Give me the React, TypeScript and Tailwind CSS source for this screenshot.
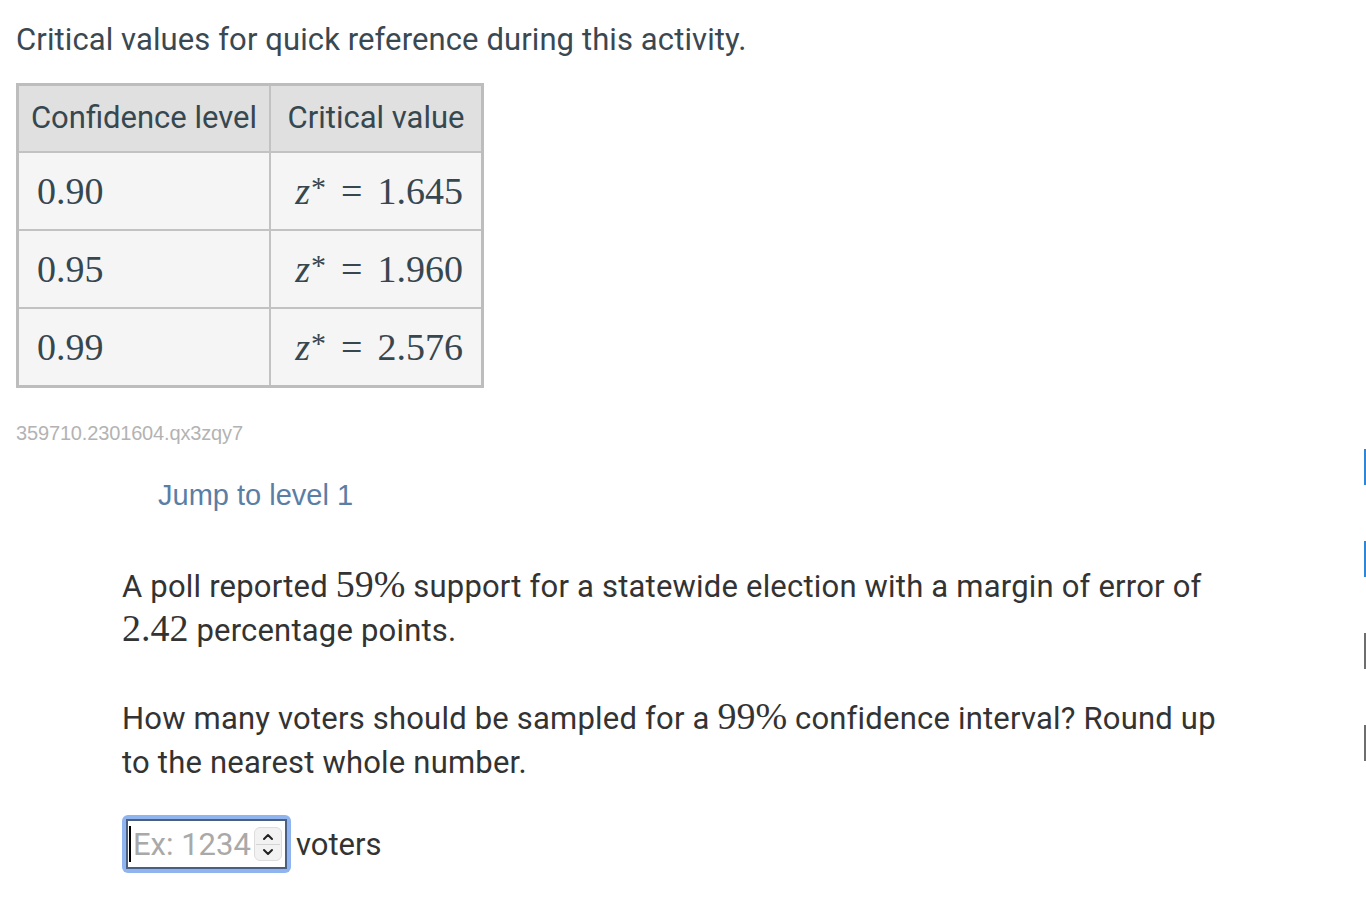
import React from "react";

const roboto = { fontFamily: "Roboto, 'Noto Sans', sans-serif" };

function M({ children }: { children: React.ReactNode }) {
  return (
    <span className="font-['Liberation_Serif','Times_New_Roman',serif] text-[38px] leading-[30px] font-normal tracking-normal">{children}</span>
  );
}

function Z() {
  return (
    <span className="font-['Liberation_Serif',serif] text-[38px] inline-flex items-baseline">
      <i className="mr-[1px]">z</i>
      <span className="text-[30px] leading-none relative -top-[7px]">*</span>
      <span className="mx-[15px]">=</span>
    </span>
  );
}

export default function App() {
  const rows = [
    ["0.90", "1.645"],
    ["0.95", "1.960"],
    ["0.99", "2.576"],
  ];
  return (
    <div className="flex w-[1366px] min-h-[904px] bg-white" style={roboto}>
      <div className="flex-1 pl-[16px] pt-[17px]">
        <h1 className="text-[31px] leading-[45px] text-[#3a4852] font-normal tracking-[0.1px]">
          Critical values for quick reference during this activity.
        </h1>

        <div className="mt-[21px] w-[468px] border-[3px] border-[#bdbdbd] bg-[#c2c2c2] grid grid-cols-[250px_210px] gap-[2px] text-[#37474f]">
          <div className="h-[65px] bg-[#e0e0e0] flex items-center justify-center text-[31px]">
            Confidence level
          </div>
          <div className="h-[65px] bg-[#e0e0e0] flex items-center justify-center text-[31px]">
            Critical value
          </div>
          {rows.map(([a, b]) => (
            <React.Fragment key={a}>
              <div className="h-[76px] bg-[#f5f5f5] flex items-center pl-[18px] font-['Liberation_Serif',serif] text-[38px]">
                {a}
              </div>
              <div className="h-[76px] bg-[#f5f5f5] flex items-center justify-end pr-[18px]">
                <Z />
                <span className="font-['Liberation_Serif',serif] text-[38px]">{b}</span>
              </div>
            </React.Fragment>
          ))}
        </div>

        <div className="mt-[33px] text-[20px] leading-[24px] text-[#b3b3b3] font-['Liberation_Sans',Arial,sans-serif] tracking-[-0.15px]">
          359710.2301604.qx3zqy7
        </div>

        <div className="mt-[32px] ml-[142px] text-[29px] leading-[36px] text-[#5a7ea6] font-['Liberation_Sans',Arial,sans-serif]">
          Jump to level 1
        </div>

        <div className="ml-[106px] mt-[52px] w-[1118px] text-[31px] leading-[44px] text-[#333333] font-normal tracking-[0.2px]">
          <p>
            A poll reported <M>59%</M> support for a statewide election with a margin of error of <M>2.42</M> percentage points.
          </p>
          <p className="mt-[44px]">
            How many voters should be sampled for a <M>99%</M> confidence interval? Round up to the nearest whole number.
          </p>

          <div className="mt-[30px] flex items-center tracking-normal">
            <div className="rounded-[6px] bg-[#8fb4ef] p-[4px]">
              <div className="relative w-[161px] h-[50px] border-2 border-[#4b5f80] bg-white flex items-center">
                <div className="ml-[1px] w-[2px] h-[36px] bg-black" />
                <span className="ml-[2px] text-[31px] leading-none text-[#a9a9a9]">Ex: 1234</span>
                <div className="ml-auto mr-[3px] w-[28px] h-[34px] rounded-[6px] bg-[#f2f2f2] border border-[#dddddd] flex flex-col items-center justify-center">
                  <svg width="12" height="8" viewBox="0 0 12 8" className="mb-[3px]">
                    <path d="M2 6 L6 2 L10 6" fill="none" stroke="#222" strokeWidth="2" strokeLinecap="round" strokeLinejoin="round" />
                  </svg>
                  <div className="w-[24px] h-px bg-[#d4d4d4]" />
                  <svg width="12" height="8" viewBox="0 0 12 8" className="mt-[3px]">
                    <path d="M2 2 L6 6 L10 2" fill="none" stroke="#222" strokeWidth="2" strokeLinecap="round" strokeLinejoin="round" />
                  </svg>
                </div>
              </div>
            </div>
            <span className="ml-[5px] text-[31px] leading-none text-[#333333]">voters</span>
          </div>
        </div>
      </div>

      <div className="w-[2px] pt-[449px] flex flex-col gap-[56px]">
        <div className="h-[36px] bg-[#2f86d6]" />
        <div className="h-[36px] bg-[#2f86d6]" />
        <div className="h-[36px] bg-[#6e6e6e]" />
        <div className="h-[36px] bg-[#6e6e6e]" />
      </div>
    </div>
  );
}
